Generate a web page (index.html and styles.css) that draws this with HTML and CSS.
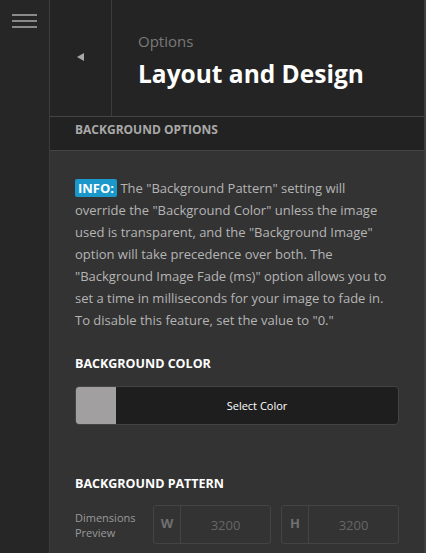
FILE: index.html
```html
<!DOCTYPE html>
<html>
<head>
<meta charset="utf-8">
<link rel="stylesheet" href="styles.css">
</head>
<body>
<div class="app">
  <aside class="sidebar">
    <div class="burger"><span></span><span></span><span></span></div>
  </aside>
  <main class="panel">
    <header class="header">
      <div class="back"><span class="tri"></span></div>
      <div class="titles">
        <div class="sub">Options</div>
        <h1 class="title">Layout and Design</h1>
      </div>
    </header>
    <div class="section-head">BACKGROUND OPTIONS</div>
    <div class="content">
      <p class="info"><span class="badge">INFO:</span> The "Background Pattern" setting will override the "Background Color" unless the image used is transparent, and the "Background Image" option will take precedence over both. The "Background Image Fade (ms)" option allows you to set a time in milliseconds for your image to fade in. To disable this feature, set the value to "0."</p>
      <h2 class="label">BACKGROUND COLOR</h2>
      <div class="picker">
        <span class="swatch"></span>
        <span class="picker-text">Select Color</span>
      </div>
      <h2 class="label label-pattern">BACKGROUND PATTERN</h2>
      <div class="dims">
        <div class="dims-label">Dimensions<br>Preview</div>
        <div class="field"><span class="field-key">W</span><span class="field-val">3200</span></div>
        <div class="field"><span class="field-key">H</span><span class="field-val">3200</span></div>
      </div>
    </div>
  </main>
</div>
</body>
</html>
```
FILE: styles.css
```css
html, body { margin: 0; padding: 0; height: 100%; }
body { background: #333333; font-family: "Open Sans", "Noto Sans", sans-serif; overflow: hidden; }
.app { display: flex; height: 553px; }
.sidebar { width: 49px; flex: none; background: #262626; border-right: 1px solid #3c3c3c; }
.burger { display: flex; flex-direction: column; gap: 4px; padding: 14px 0 0 12px; }
.burger span { display: block; width: 25px; height: 2px; background: #8a8a8a; }
.panel { flex: 1; display: flex; flex-direction: column; border-right: 2px solid #3e3e3e; min-width: 0; }
.header { display: flex; height: 116px; background: #242424; border-bottom: 1px solid #454545; }
.back { width: 62px; flex: none; border-right: 1px solid #3c3c3c; display: flex; justify-content: center; padding-top: 53px; box-sizing: border-box; }
.tri { width: 0; height: 0; border-top: 4px solid transparent; border-bottom: 4px solid transparent; border-right: 7px solid #a8a8a8; }
.titles { padding: 30px 0 0 26px; }
.sub { color: #7a7a7a; font-size: 15px; line-height: 22px; }
.title { margin: 6px 0 0; color: #ffffff; font-size: 24.5px; font-weight: 700; line-height: 32px; }
.section-head { height: 33px; line-height: 25px; background: #222222; border-bottom: 1px solid #454545; color: #a9a9a9; font-size: 12px; font-weight: 700; padding-left: 25px; }
.content { padding: 26px 25px 0 25px; }
.info { margin: 0; color: #b5b5b5; font-size: 13px; line-height: 22px; }
.badge { background: #1a98cc; color: #ffffff; font-weight: 700; padding: 0 3px; border-radius: 2px; }
.label { margin: 24px 0 0; color: #ffffff; font-size: 12.5px; font-weight: 700; line-height: 18px; }
.label-pattern { margin-top: 50px; }
.picker { margin-top: 13px; height: 39px; display: flex; background: #1e1e1e; border: 1px solid #444444; border-radius: 4px; overflow: hidden; box-sizing: border-box; }
.swatch { width: 40px; background: #a19f9f; flex: none; }
.picker-text { flex: 1; display: flex; align-items: center; justify-content: center; color: #ffffff; font-size: 11px; }
.dims { display: flex; margin-top: 12px; align-items: center; gap: 10px; }
.dims-label { width: 68px; color: #9a9a9a; font-size: 11px; line-height: 15px; }
.field { display: flex; width: 118px; height: 39px; border: 1px solid #444444; border-radius: 3px; box-sizing: border-box; }
.field-key { width: 27px; border-right: 1px solid #444444; color: #707070; font-weight: 700; font-size: 13px; display: flex; justify-content: center; padding-top: 8px; box-sizing: border-box; }
.field-val { flex: 1; color: #666666; font-size: 13px; display: flex; align-items: center; justify-content: center; }
```
